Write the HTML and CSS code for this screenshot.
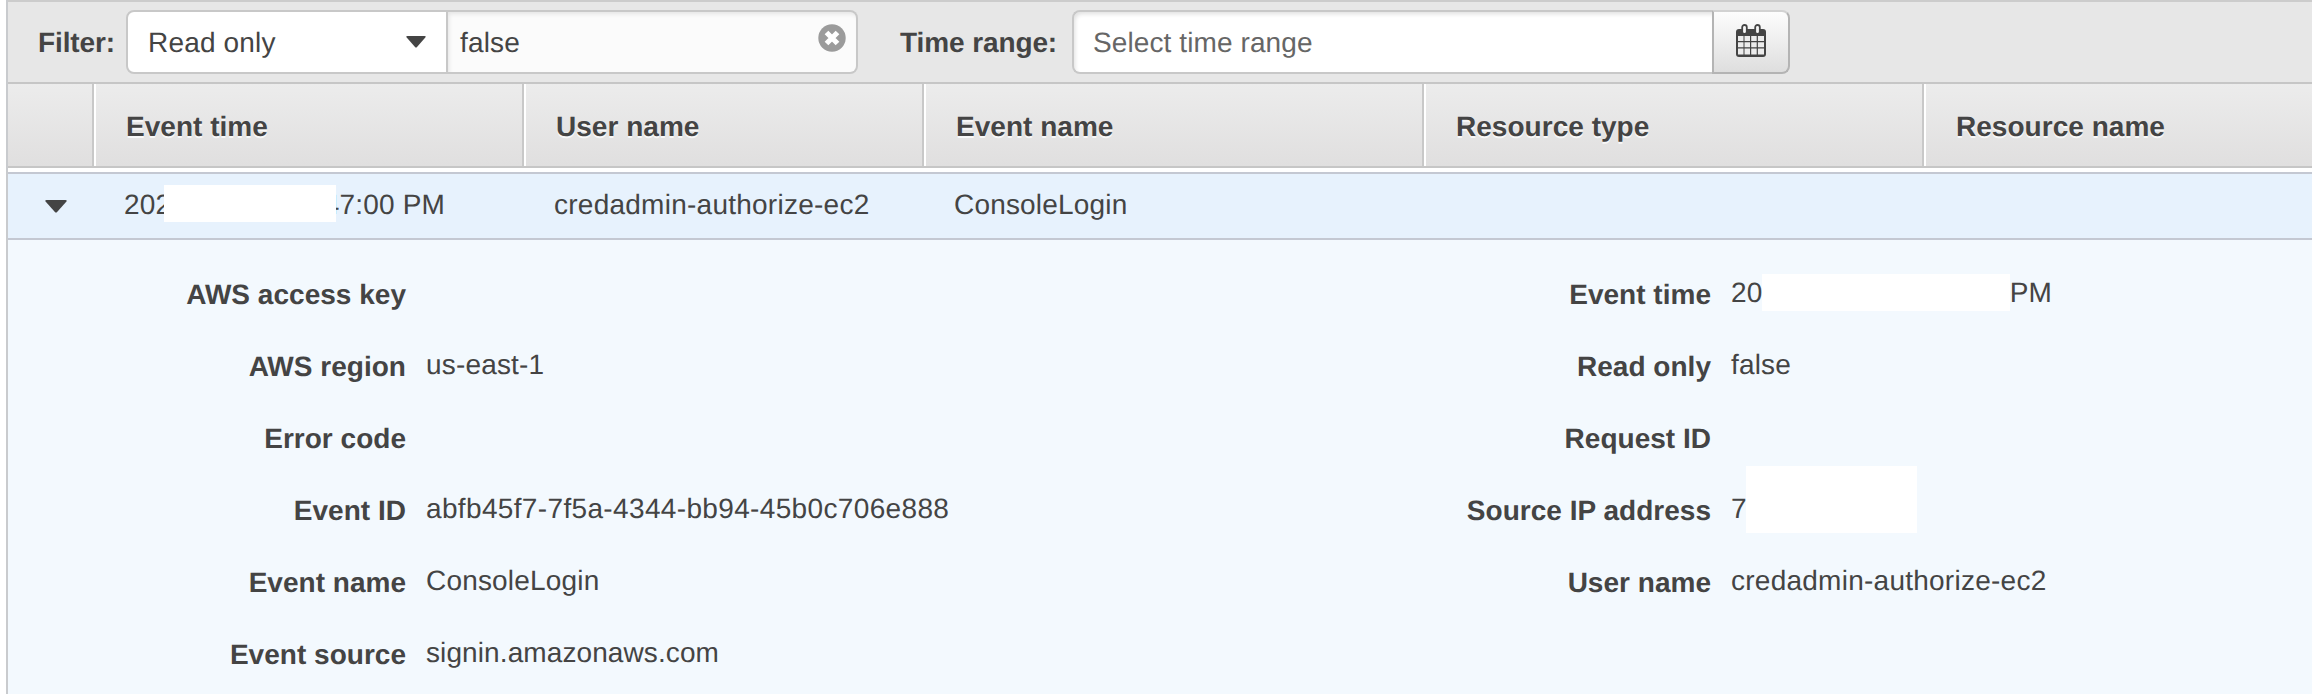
FILE: index.html
```html
<!DOCTYPE html>
<html lang="en">
<head>
<meta charset="utf-8">
<title>Event history</title>
<link rel="stylesheet" href="styles.css">
</head>
<body>
<main class="panel">
  <div class="filters">
    <span class="filter-label">Filter:</span>
    <div class="select">
      <span>Read only</span>
      <svg class="caret" width="20" height="12" viewBox="0 0 20 12"><path d="M1.500 0h17q2 0 .8 1.500L11 11q-1 1-2 0L.7 1.500Q-.500 0 1.500 0z"/></svg>
    </div>
    <div class="field">
      <span>false</span>
      <svg class="clear" width="28" height="28" viewBox="0 0 28 28"><circle cx="14" cy="14" r="13.700" fill="#9b9b9b"/><path d="M8.500 8.500l11 11M19.500 8.500l-11 11" stroke="#fff" stroke-width="5.200"/></svg>
    </div>
    <span class="range-label">Time range:</span>
    <div class="range">Select time range</div>
    <div class="calendar">
      <svg width="30" height="33" viewBox="0 0 30 33">
        <rect x="0" y="5" width="30" height="28" rx="3" fill="#444"/>
        <path d="M2 12h5.500v5H2zM8.500 12H14v5H8.500zM15.200 12h5.500v5h-5.500zM21.900 12H28v5h-6.100zM2 18.300h5.500v5H2zM8.500 18.300H14v5H8.500zM15.200 18.300h5.500v5h-5.500zM21.900 18.300H28v5h-6.100zM2 24.600h5.500v6H2zM8.500 24.600H14v6H8.500zM15.200 24.600h5.500v6h-5.500zM21.900 24.600H28v6h-6.100z" fill="#ececec"/>
        <rect x="6.200" y="1" width="4.600" height="9" rx="2.300" fill="#f6f6f6" stroke="#444" stroke-width="1.800"/>
        <rect x="19.200" y="1" width="4.600" height="9" rx="2.300" fill="#f6f6f6" stroke="#444" stroke-width="1.800"/>
      </svg>
    </div>
  </div>

  <div class="columns head">
    <div></div>
    <div>Event time</div>
    <div>User name</div>
    <div>Event name</div>
    <div>Resource type</div>
    <div>Resource name</div>
  </div>

  <div class="columns row">
    <div class="toggle"><svg class="caret" width="22" height="13" viewBox="0 0 20 12" preserveAspectRatio="none"><path d="M1.500 0h17q2 0 .8 1.500L11 11q-1 1-2 0L.7 1.500Q-.500 0 1.500 0z"/></svg></div>
    <div class="when"><span>202</span><span>47:00 PM</span><i class="mask mask-when"></i></div>
    <div class="user">credadmin-authorize-ec2</div>
    <div>ConsoleLogin</div>
    <div></div>
    <div></div>
  </div>

  <div class="details">
    <dl class="list">
      <dt>AWS access key</dt><dd></dd>
      <dt>AWS region</dt><dd>us-east-1</dd>
      <dt>Error code</dt><dd></dd>
      <dt>Event ID</dt><dd class="uuid">abfb45f7-7f5a-4344-bb94-45b0c706e888</dd>
      <dt>Event name</dt><dd>ConsoleLogin</dd>
      <dt>Event source</dt><dd class="source">signin.amazonaws.com</dd>
    </dl>
    <dl class="list">
      <dt>Event time</dt><dd class="time"><span>20</span><span>PM</span><i class="mask mask-time"></i></dd>
      <dt>Read only</dt><dd>false</dd>
      <dt>Request ID</dt><dd></dd>
      <dt>Source IP address</dt><dd>7<i class="mask mask-ip"></i></dd>
      <dt>User name</dt><dd class="user">credadmin-authorize-ec2</dd>
    </dl>
  </div>
</main>
</body>
</html>
```

FILE: styles.css
```css
* { box-sizing: border-box; }

body {
  margin: 0;
  height: 694px;
  padding-left: 6px;
  overflow: hidden;
  background: #fff;
  color: #444;
  font: 28px/32px "Liberation Sans", Arial, sans-serif;
  letter-spacing: .18px;
  text-rendering: geometricPrecision;
  white-space: nowrap;
}

.panel {
  height: 694px;
  display: flex;
  flex-direction: column;
  border-left: 2px solid #c9cbce;
}

.filters {
  height: 84px;
  flex: none;
  display: flex;
  align-items: center;
  padding-left: 30px;
  background: #e7e7e7;
  border-top: 2px solid #ccc;
  border-bottom: 2px solid #c6c6c6;
}

.filters span, .range { padding-top: 2px; }

.filter-label, .range-label {
  font-weight: bold;
  letter-spacing: -.1px;
}

.filter-label { width: 88px; }
.range-label { width: 172px; margin-left: 42px; }

.select, .field, .range, .calendar {
  height: 64px;
  display: flex;
  align-items: center;
  border: 2px solid #c8c8c8;
}

.select {
  width: 322px;
  justify-content: space-between;
  padding: 0 20px 0 20px;
  background: #fff;
  border-radius: 8px 0 0 8px;
}

.caret { fill: #444; display: block; }

.field {
  width: 410px;
  justify-content: space-between;
  padding: 0 10px 0 12px;
  background: #fbfbfb;
  border-left: 0;
  border-radius: 0 8px 8px 0;
  box-shadow: inset 2px 3px 4px -1px #e4e4e4;
}

.clear { margin-bottom: 8px; }

.range {
  width: 640px;
  padding-left: 19px;
  background: #fff;
  color: #666;
  letter-spacing: .1px;
  border-right: 0;
  border-radius: 8px 0 0 8px;
  box-shadow: inset 2px 3px 4px -1px #e0e0e0;
}

.calendar {
  width: 78px;
  justify-content: center;
  padding-bottom: 4px;
  background: linear-gradient(#fdfdfd, #dedede);
  border-color: #d2d2d2 #b4b4b4 #b4b4b4 #b4b4b4;
  border-radius: 0 8px 8px 0;
}

.columns {
  display: grid;
  grid-template-columns: 86px 430px 400px 500px 500px 1fr;
  flex: none;
}

.head {
  height: 84px;
  font-weight: bold;
  letter-spacing: .03px;
  text-shadow: 0 2px 0 #f8f8f8;
  background: linear-gradient(#ececec, #e0dfdf);
  border-bottom: 2px solid #c6c6c6;
}

.head > div {
  padding: 27px 0 0 30px;
  border-left: 2px solid #fff;
  border-right: 2px solid #c8c8c8;
}

.head > div:first-child { border-left: 0; }
.head > div:last-child { border-right: 0; }

.row {
  height: 68px;
  margin-top: 4px;
  background: #e7f2fd;
  border-top: 2px solid #c4c8d2;
  border-bottom: 2px solid #c4c8d2;
}

.row > div { padding: 15px 0 0 30px; }
.row > .toggle { padding: 26px 0 0 37px; }

.row > .when {
  position: relative;
  display: flex;
  justify-content: space-between;
  padding-right: 79px;
}

.mask { position: absolute; background: #fff; }
.mask-when { left: 70px; top: 11px; width: 172px; height: 37px; }

.details {
  flex: 1;
  display: grid;
  grid-template-columns: 1305px 1fr;
  background: #f3f9fe;
}

.list {
  margin: 0;
  padding-top: 39px;
  display: grid;
  grid-template-columns: 398px 1fr;
  grid-auto-rows: 72px;
  align-content: start;
  column-gap: 20px;
}

dt {
  font-weight: bold;
  letter-spacing: .02px;
  text-align: right;
}

dd { margin: -2px 0 0; position: relative; }
.user { letter-spacing: .25px; }
.uuid { letter-spacing: .35px; }
.source { letter-spacing: .1px; }

.time {
  width: 321px;
  display: flex;
  justify-content: space-between;
}

.mask-time { left: 31px; top: -3px; width: 248px; height: 37px; }
.mask-ip { left: 15px; top: -27px; width: 171px; height: 67px; }
```
